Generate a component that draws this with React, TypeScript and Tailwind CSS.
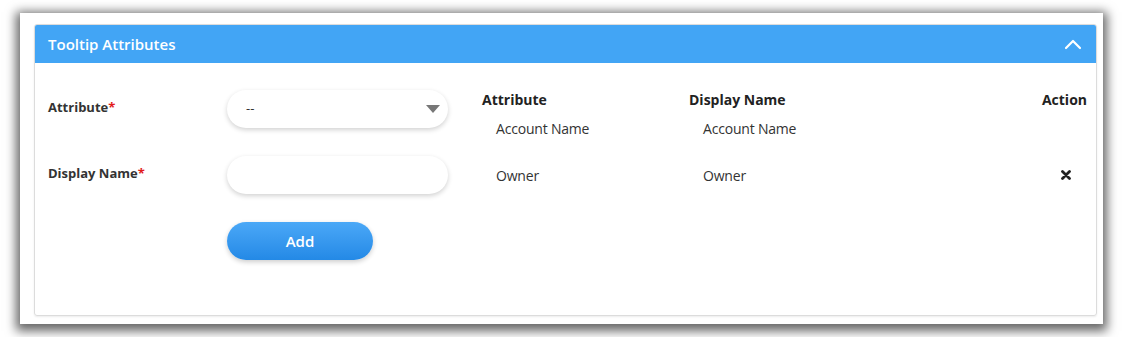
import React from "react";

export default function App() {
  const font = { fontFamily: '"Open Sans", "Noto Sans", sans-serif' };
  return (
    <div className="w-[1124px] h-[337px] bg-white pt-[13px] pl-[20px]" style={font}>
      <div className="w-[1083px] h-[311px] bg-white shadow-[0_3px_10px_4px_rgba(0,0,0,0.6)] pt-[11px] pl-[14px]">
        <div className="w-[1063px] h-[292px] border border-[#dcdcdc] rounded-[3px] shadow-[0_1px_2px_rgba(0,0,0,0.08)] overflow-hidden">
          <div className="h-[38px] bg-[#42a5f5] flex items-center justify-between pl-[13px] pr-[14px]">
            <span className="text-white text-[15px] font-semibold">Tooltip Attributes</span>
            <svg width="18" height="12" viewBox="0 0 18 12" fill="none">
              <path d="M2 10 L9 3 L16 10" stroke="white" strokeWidth="2.2" strokeLinecap="round" strokeLinejoin="round" />
            </svg>
          </div>
          <div className="flex pl-[13px] pt-[27px]">
            <div className="w-[400px] flex flex-col">
              <div className="flex items-center h-[38px]">
                <div className="w-[179px] text-[13px] font-bold text-[#333] -mt-[3px]">
                  Attribute<span className="text-[#e21b1b]">*</span>
                </div>
                <div className="w-[221px] h-[38px] rounded-full bg-white shadow-[0_2px_5px_rgba(0,0,0,0.18)] flex items-center justify-between pl-[19px] pr-[8px]">
                  <span className="text-[13px] text-[#333]">--</span>
                  <svg width="14" height="8" viewBox="0 0 14 8">
                    <path d="M0 0 L14 0 L7 8 Z" fill="#777" />
                  </svg>
                </div>
              </div>
              <div className="flex items-center h-[38px] mt-[28px]">
                <div className="w-[179px] text-[13px] font-bold text-[#333] -mt-[3px]">
                  Display Name<span className="text-[#e21b1b]">*</span>
                </div>
                <div className="w-[221px] h-[38px] rounded-full bg-white shadow-[0_2px_5px_rgba(0,0,0,0.18)]" />
              </div>
              <div className="flex mt-[28px]">
                <div className="w-[179px]" />
                <button className="w-[146px] h-[38px] rounded-full bg-gradient-to-b from-[#4aa8f7] to-[#2389e6] text-white text-[15px] font-semibold shadow-[0_2px_5px_rgba(0,0,0,0.2)]">
                  Add
                </button>
              </div>
            </div>
            <div className="ml-[34px] w-[605px] text-[14px] text-[#333]">
              <div className="flex font-bold text-[#222] -mt-[1px] h-[20px] items-center">
                <div className="w-[207px]">Attribute</div>
                <div className="flex-1">Display Name</div>
                <div>Action</div>
              </div>
              <div className="flex mt-[9px] h-[20px] items-center tracking-[-0.2px]">
                <div className="w-[207px] pl-[14px]">Account Name</div>
                <div className="flex-1 pl-[14px]">Account Name</div>
              </div>
              <div className="flex mt-[27px] h-[20px] items-center tracking-[-0.2px]">
                <div className="w-[207px] pl-[14px]">Owner</div>
                <div className="flex-1 pl-[14px]">Owner</div>
                <div className="w-[20px] mr-[11px] flex justify-center">
                  <svg width="10" height="10" viewBox="0 0 10 10">
                    <path d="M1.5 1.5 L8.5 8.5 M8.5 1.5 L1.5 8.5" stroke="#222" strokeWidth="2.8" strokeLinecap="round" />
                  </svg>
                </div>
              </div>
            </div>
          </div>
        </div>
      </div>
    </div>
  );
}
